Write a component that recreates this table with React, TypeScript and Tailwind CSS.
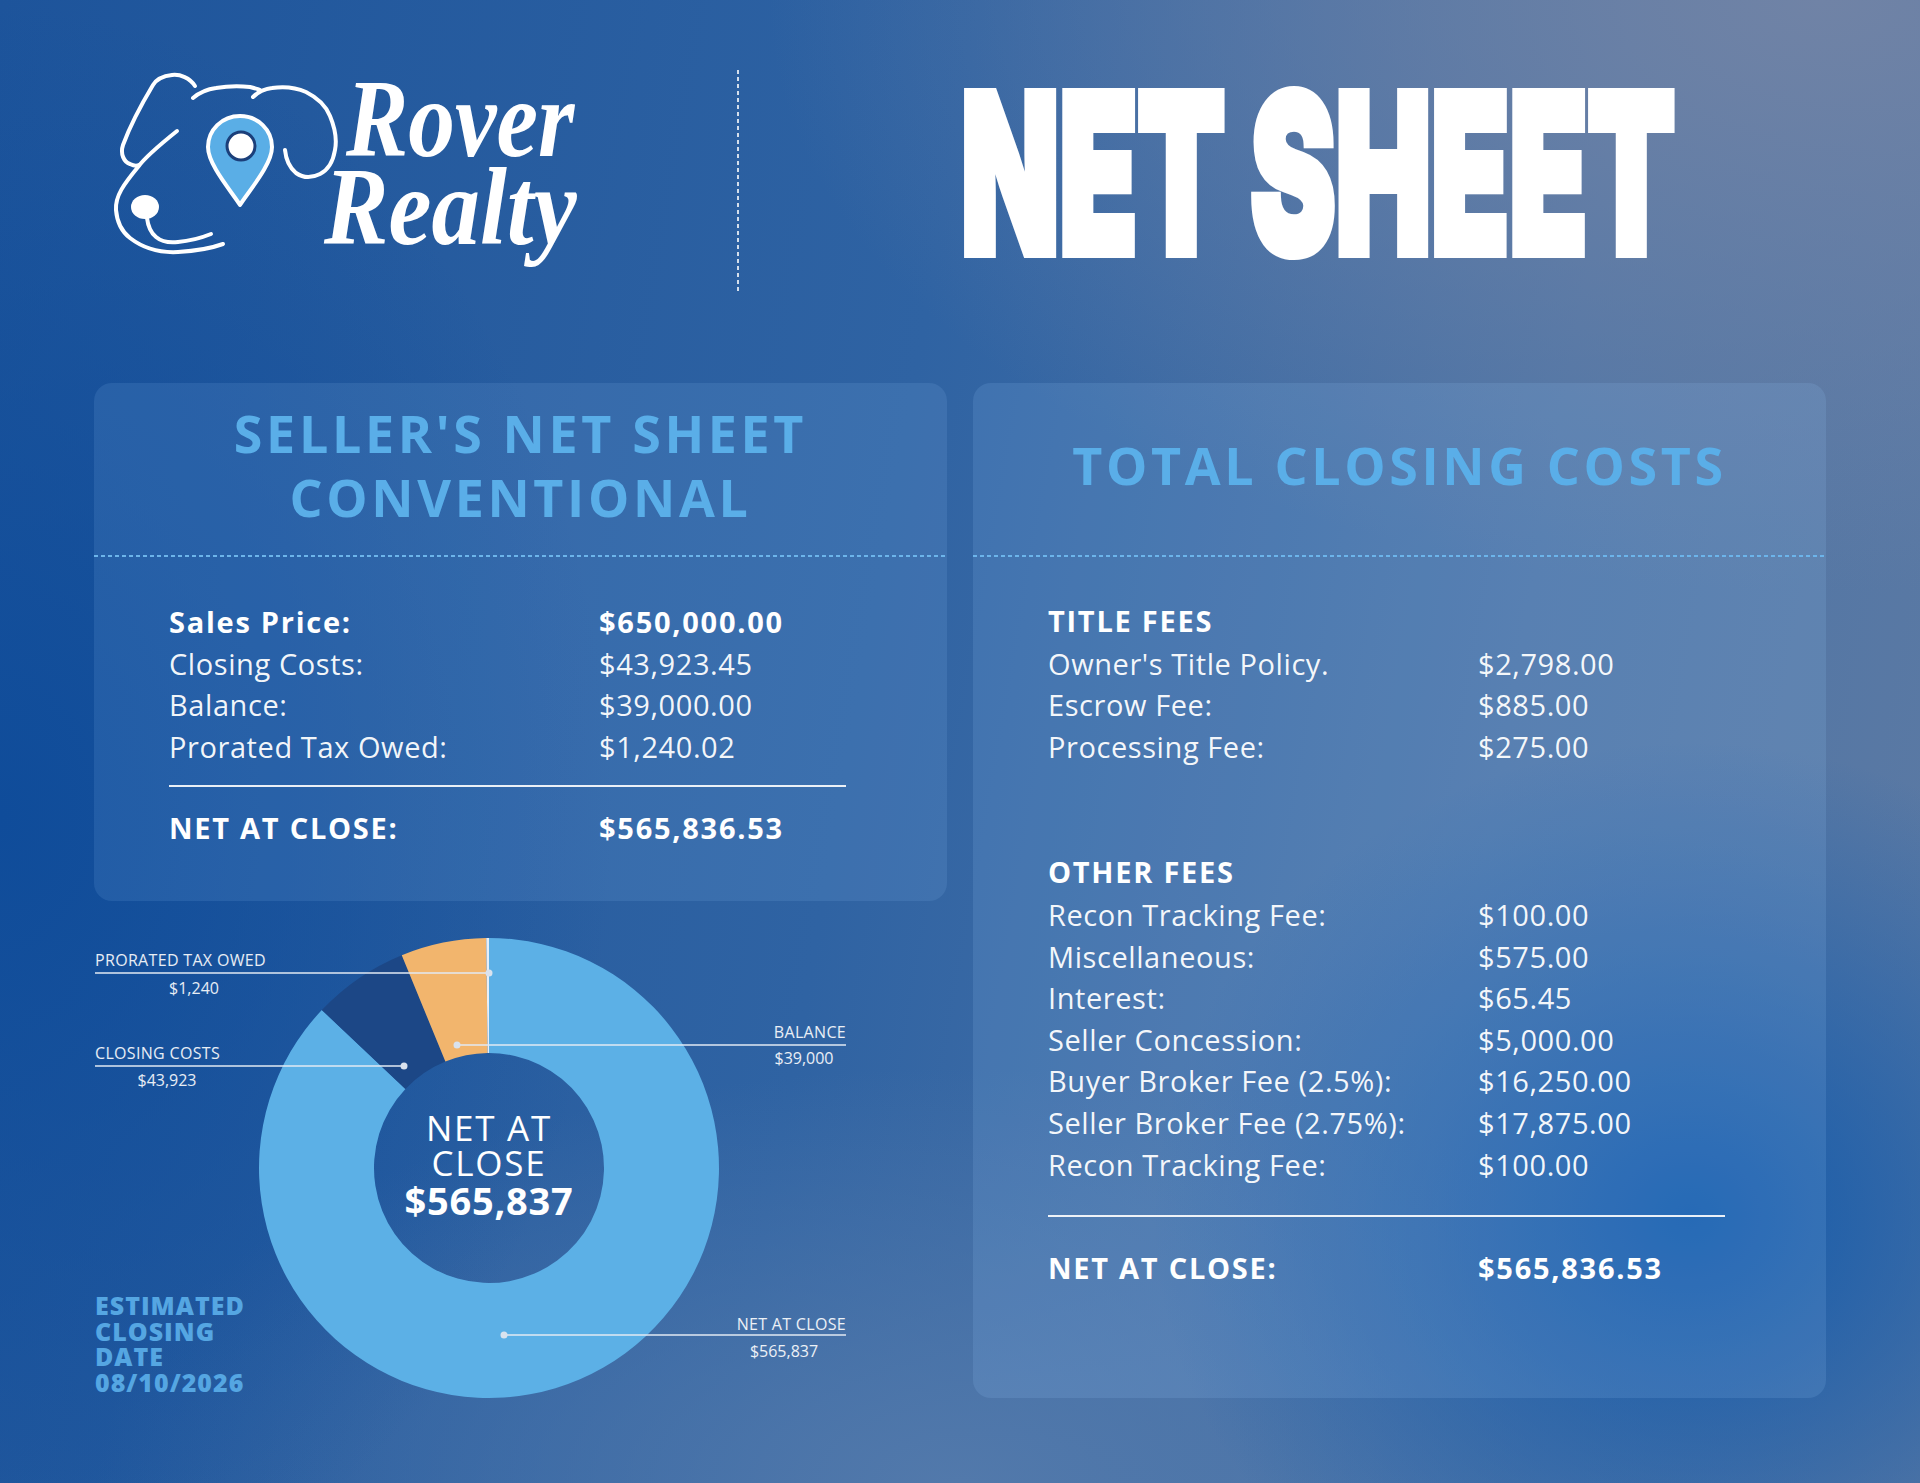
import React from "react";

const CX = 395;
const CY = 267;
const RO = 230;
const RI = 115;

function pt(r: number, deg: number): [number, number] {
  const a = (deg * Math.PI) / 180;
  return [CX + r * Math.sin(a), CY - r * Math.cos(a)];
}

function seg(a0: number, a1: number): string {
  const [x0, y0] = pt(RO, a0);
  const [x1, y1] = pt(RO, a1);
  const [x2, y2] = pt(RI, a1);
  const [x3, y3] = pt(RI, a0);
  const large = a1 - a0 > 180 ? 1 : 0;
  return `M${x0} ${y0} A${RO} ${RO} 0 ${large} 1 ${x1} ${y1} L${x2} ${y2} A${RI} ${RI} 0 ${large} 0 ${x3} ${y3} Z`;
}

const TOTAL = 650000;
const PARTS = [
  { v: 565836.53, c: "#5cb0e6" },
  { v: 43923.45, c: "#1c4786" },
  { v: 39000, c: "#f2b56d" },
  { v: 1240.02, c: "#e6eef7" },
];

function Donut() {
  let acc = 0;
  const paths = PARTS.map((p, i) => {
    const a0 = (acc / TOTAL) * 360;
    acc += p.v;
    const a1 = (acc / TOTAL) * 360;
    return <path key={i} d={seg(a0, a1)} fill={p.c} />;
  });
  return (
    <svg className="absolute left-0 top-0" width="853" height="497" viewBox="0 0 853 497">
      {paths}
      <g stroke="rgba(225,233,243,0.75)" strokeWidth="2">
        <line x1="1" y1="72" x2="395" y2="72" />
        <line x1="1" y1="165" x2="310" y2="165" />
        <line x1="363" y1="144" x2="752" y2="144" />
        <line x1="410" y1="434" x2="752" y2="434" />
      </g>
      <g fill="#d9e2ee">
        <circle cx="395" cy="72" r="3.5" />
        <circle cx="310" cy="165" r="3.5" />
        <circle cx="363" cy="144" r="3.5" />
        <circle cx="410" cy="434" r="3.5" />
      </g>
    </svg>
  );
}

function Logo() {
  return (
    <div className="flex items-start w-[632px] shrink-0">
      <svg width="245" height="240" viewBox="105 62 245 240" className="shrink-0">
        <g stroke="white" strokeWidth="4" fill="none" strokeLinecap="round" strokeLinejoin="round">
          <path d="M195 86 C190 78 180 74 172 75 C163 76 156 80 153 85 C144 100 130 126 123 145 C120 154 124 162 130 164 C134 166 137 166 139 165" />
          <path d="M177 131 C162 143 146 156 138 167 C124 184 115 196 116 210 C117 222 121 231 130 238 C143 248 160 253 178 252 C195 251 212 248 223 244" />
          <path d="M193 98 C200 92 208 89 216 88 C228 86 240 86 250 87 C254 88 258 89 260 90" />
          <path d="M253 97 C258 92 264 89 272 88 C285 86 297 88 306 92 C318 98 326 106 330 116 C335 128 337 140 335 150 C333 162 328 170 320 174 C312 178 303 178 296 173 C290 168 286 160 285 150" />
          <path d="M147 218 C148 226 151 233 156 237 C162 242 170 243 178 242 C190 241 201 238 211 234" />
        </g>
        <ellipse cx="145" cy="207" rx="14" ry="12" fill="white" />
        <path
          d="M240 116 C222 116 208 130 208 147 C208 165 232 192 240 205 C248 192 272 165 272 147 C272 130 258 116 240 116 Z"
          fill="#5aaee6"
          stroke="white"
          strokeWidth="4"
          strokeLinejoin="round"
        />
        <circle cx="241" cy="146" r="14" fill="white" stroke="#1b3f7a" strokeWidth="3" />
      </svg>
      <div className="-ml-[4px] mt-[13px] flex flex-col font-['Liberation_Serif',serif] italic font-bold text-white text-[110px] leading-[88px] shrink-0">
        <span className="inline-block scale-x-[0.85] origin-left">Rover</span>
        <span className="inline-block scale-x-[0.88] origin-left -ml-[22px]">Realty</span>
      </div>
    </div>
  );
}

function Row({ label, value, bold }: { label: string; value: string; bold?: boolean }) {
  return (
    <div
      className={
        bold
          ? "grid grid-cols-[430px_1fr] h-[41.6px] items-center font-bold tracking-[0.06em] text-white"
          : "grid grid-cols-[430px_1fr] h-[41.6px] items-center tracking-[0.02em] text-white/95"
      }
    >
      <span>{label}</span>
      <span>{value}</span>
    </div>
  );
}

function Dashed() {
  return <div className="h-[2px] w-full bg-[repeating-linear-gradient(to_right,#6cb4ea_0_4px,transparent_4px_7px)]" />;
}

export default function App() {
  return (
    <div className="relative w-[1920px] h-[1483px] overflow-hidden font-['Open_Sans',sans-serif] bg-[radial-gradient(ellipse_55%_40%_at_95%_0%,#7083a6_0%,transparent_100%),radial-gradient(ellipse_28%_32%_at_88%_82%,#135aab_0%,transparent_100%),radial-gradient(ellipse_32%_55%_at_0%_55%,#0f4c9a_0%,transparent_100%),radial-gradient(ellipse_45%_28%_at_50%_100%,#5279ab_0%,transparent_100%),linear-gradient(100deg,#1d549b_0%,#2f63a3_45%,#4d74a6_75%,#5d7aa3_100%)]">
      {/* Header */}
      <div className="flex items-start h-[383px] pl-[105px] pt-[62px]">
        <Logo />
        <div className="shrink-0 mt-[8px] h-[224px] w-[2px] bg-[repeating-linear-gradient(to_bottom,rgba(255,255,255,0.8)_0_4px,transparent_4px_7px)]" />
        <div className="shrink-0 ml-[222px] mt-[1px] font-['Inter',sans-serif] font-black text-white text-[220px] leading-none [-webkit-text-stroke:10px_white] inline-block scale-x-[0.58] origin-left whitespace-nowrap">
          NET SHEET
        </div>
      </div>

      {/* Main */}
      <div className="flex px-[94px] gap-[26px]">
        {/* Left column */}
        <div className="w-[853px] shrink-0 flex flex-col">
          <div className="h-[518px] rounded-[18px] bg-[#9fd0ff]/[0.12] flex flex-col">
            <div className="h-[172px] pb-[8px] flex items-center justify-center text-center text-[52px] font-bold leading-[64px] tracking-[0.07em] text-[#5aaee8]">
              SELLER'S NET SHEET
              <br />
              CONVENTIONAL
            </div>
            <Dashed />
            <div className="pl-[75px] pt-[43px] w-[752px] text-[29px]">
              <Row label="Sales Price:" value="$650,000.00" bold />
              <Row label="Closing Costs:" value="$43,923.45" />
              <Row label="Balance:" value="$39,000.00" />
              <Row label="Prorated Tax Owed:" value="$1,240.02" />
              <div className="mt-[19px] h-[2px] bg-white/90" />
              <div className="mt-[19px]">
                <Row label="NET AT CLOSE:" value="$565,836.53" bold />
              </div>
            </div>
          </div>

          {/* Chart */}
          <div className="relative h-[497px] text-white">
            <Donut />
            <div className="absolute left-[1px] top-[59px] -translate-y-1/2 text-[16px] tracking-[0.02em] text-white/90">PRORATED TAX OWED</div>
            <div className="absolute left-[100px] top-[87px] -translate-x-1/2 -translate-y-1/2 text-[16px] text-white/90">$1,240</div>
            <div className="absolute left-[1px] top-[152px] -translate-y-1/2 text-[16px] tracking-[0.02em] text-white/90">CLOSING COSTS</div>
            <div className="absolute left-[73px] top-[179px] -translate-x-1/2 -translate-y-1/2 text-[16px] text-white/90">$43,923</div>
            <div className="absolute right-[101px] top-[131px] -translate-y-1/2 text-[16px] tracking-[0.02em] text-white/90">BALANCE</div>
            <div className="absolute left-[710px] top-[157px] -translate-x-1/2 -translate-y-1/2 text-[16px] text-white/90">$39,000</div>
            <div className="absolute right-[101px] top-[423px] -translate-y-1/2 text-[16px] tracking-[0.02em] text-white/90">NET AT CLOSE</div>
            <div className="absolute left-[690px] top-[450px] -translate-x-1/2 -translate-y-1/2 text-[16px] text-white/90">$565,837</div>

            <div className="absolute left-[395px] top-[264px] -translate-x-1/2 -translate-y-1/2 flex flex-col items-center text-white">
              <span className="text-[35px] leading-[35px] tracking-[0.05em]">NET AT</span>
              <span className="text-[35px] leading-[35px] tracking-[0.05em]">CLOSE</span>
              <span className="text-[38px] leading-[40px] font-bold tracking-[0.02em]">$565,837</span>
            </div>

            <div className="absolute left-[1px] top-[392px] flex flex-col text-[25px] leading-[25.7px] font-extrabold text-[#55a6e2] tracking-[0.04em]">
              <span>ESTIMATED</span>
              <span>CLOSING</span>
              <span>DATE</span>
              <span>08/10/2026</span>
            </div>
          </div>
        </div>

        {/* Right card */}
        <div className="w-[853px] shrink-0 h-[1015px] rounded-[18px] bg-[#9fd0ff]/[0.14] flex flex-col">
          <div className="h-[172px] pb-[8px] flex items-center justify-center text-center text-[52px] font-bold leading-[64px] tracking-[0.07em] text-[#5aaee8]">
            TOTAL CLOSING COSTS
          </div>
          <Dashed />
          <div className="pl-[75px] pt-[43px] w-[752px] text-[29px]">
            <div className="h-[41.6px] flex items-center font-bold tracking-[0.06em] text-white">TITLE FEES</div>
            <Row label="Owner's Title Policy." value="$2,798.00" />
            <Row label="Escrow Fee:" value="$885.00" />
            <Row label="Processing Fee:" value="$275.00" />
            <div className="mt-[85px] h-[41.6px] flex items-center font-bold tracking-[0.06em] text-white">OTHER FEES</div>
            <Row label="Recon Tracking Fee:" value="$100.00" />
            <Row label="Miscellaneous:" value="$575.00" />
            <Row label="Interest:" value="$65.45" />
            <Row label="Seller Concession:" value="$5,000.00" />
            <Row label="Buyer Broker Fee (2.5%):" value="$16,250.00" />
            <Row label="Seller Broker Fee (2.75%):" value="$17,875.00" />
            <Row label="Recon Tracking Fee:" value="$100.00" />
            <div className="mt-[31px] h-[2px] bg-white/90" />
            <div className="mt-[29px]">
              <Row label="NET AT CLOSE:" value="$565,836.53" bold />
            </div>
          </div>
        </div>
      </div>
    </div>
  );
}
